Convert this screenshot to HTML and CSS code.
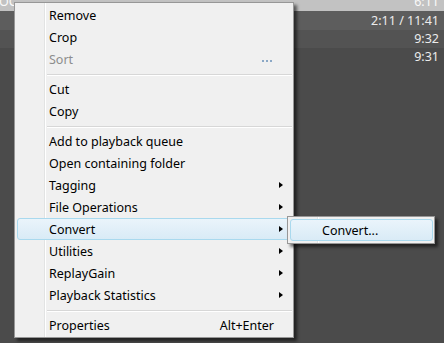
FILE: index.html
```html
<!DOCTYPE html>
<html lang="en">
<head>
  <meta charset="UTF-8">
  <title>Playlist Context Menu</title>
  <link rel="stylesheet" href="styles.css">
</head>
<body>
  <!-- Playlist rows behind the menu -->
  <section class="playlist">
    <div class="row row-selected"><span class="title">OC</span><span>6:11</span></div>
    <div class="row row-playing"><span></span><span>2:11 / 11:41</span></div>
    <div class="row row-odd"><span></span><span>9:32</span></div>
    <div class="row"><span></span><span>9:31</span></div>
  </section>

  <!-- Context menu -->
  <div class="menu">
    <div class="item">Remove</div>
    <div class="item">Crop</div>
    <div class="item disabled">Sort <span class="dots"><i></i><i></i><i></i></span></div>
    <div class="sep"></div>
    <div class="item">Cut</div>
    <div class="item">Copy</div>
    <div class="sep"></div>
    <div class="item">Add to playback queue</div>
    <div class="item">Open containing folder</div>
    <div class="item sub">Tagging</div>
    <div class="item sub">File Operations</div>
    <div class="item sub active">Convert</div>
    <div class="item sub">Utilities</div>
    <div class="item sub">ReplayGain</div>
    <div class="item sub">Playback Statistics</div>
    <div class="sep"></div>
    <div class="item">Properties <span class="key">Alt+Enter</span></div>
  </div>

  <!-- Convert submenu -->
  <div class="menu submenu">
    <div class="item active">Convert...</div>
  </div>
</body>
</html>
```

FILE: styles.css
```css
body {
  margin: 0;
  width: 444px;
  height: 343px;
  overflow: hidden;
  background-color: #4b4b4b;
  font-family: "Noto Sans", "Liberation Sans", sans-serif;
  font-size: 12.5px;
}
.playlist {
  display: flex;
  flex-direction: column;
}
.row {
  height: 18px;
  line-height: 18px;
  display: flex;
  justify-content: space-between;
  padding: 0 5px 0 0;
  color: #ececec;
}
.row-selected {
  height: 11px;
  line-height: 4px;
  background-color: #c2c2c2;
  color: #fafafa;
}
.row-playing {
  height: 19px;
  line-height: 19px;
  background-color: #5d5d5d;
}
.row-odd {
  background-color: #535353;
}
.title {
  margin-left: -1px;
}

.menu {
  position: absolute;
  left: 14px;
  top: 2px;
  width: 275px;
  padding: 1px 1px 1px 2px;
  border: 1px solid #979797;
  background-color: #f0f0f0;
  background-image: linear-gradient(to right, transparent 29px, #e2e3e3 29px, #e2e3e3 30px, #ffffff 30px, #ffffff 31px, transparent 31px);
  box-shadow: 3px 3px 3px rgba(0, 0, 0, 0.55);
  color: #000;
}
.item {
  position: relative;
  box-sizing: border-box;
  height: 22px;
  line-height: 21px;
  padding-left: 31px;
  border: 1px solid transparent;
  white-space: nowrap;
}
.item.disabled {
  color: #8d8d8d;
}
.item.active {
  border-color: #a9d9ee;
  border-radius: 3px;
  background: linear-gradient(to bottom, #eaf4fb, #d9ebf6);
}
.sub::after {
  content: "";
  position: absolute;
  right: 8px;
  top: 7px;
  border-left: 4px solid #000;
  border-top: 3.5px solid transparent;
  border-bottom: 3.5px solid transparent;
}
.dots {
  position: absolute;
  right: 19px;
  top: 11px;
  display: flex;
  gap: 2px;
}
.dots i {
  width: 2px;
  height: 2px;
  background-color: #8ba8c6;
}
.key {
  position: absolute;
  right: 17px;
}
.sep {
  height: 8px;
  margin-left: 30px;
  background-image: linear-gradient(to bottom, transparent 4px, #d7d7d7 4px, #d7d7d7 5px, #ffffff 5px, #ffffff 6px, transparent 6px);
}

.submenu {
  left: 287px;
  top: 216px;
  width: 143px;
  padding: 2px 1px 2px 2px;
}
```
